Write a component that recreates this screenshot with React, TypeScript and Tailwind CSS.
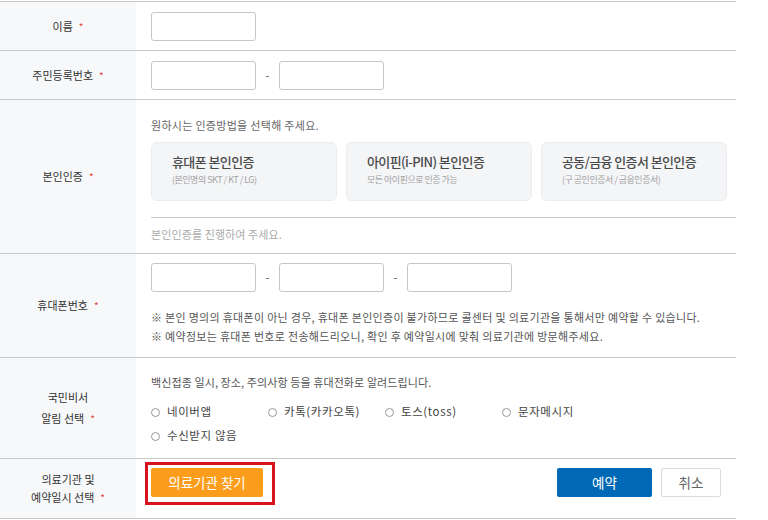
import React from "react"

const FONT = { fontFamily: '"Malgun Gothic", "Noto Sans CJK KR", "Noto Sans", sans-serif' }

function Label({ lines, leading = "leading-[21px]" }: { lines: string[]; leading?: string }) {
  return (
    <div className={`w-[136px] shrink-0 bg-[#f7f8fa] flex flex-col items-center justify-center text-[11px] text-[#333] text-center ${leading}`}>
      {lines.map((l, i) => (
        <div key={i}>
          {l}
          {i === lines.length - 1 && <span className="text-[#e2443b] ml-[6px] text-[10px]">*</span>}
        </div>
      ))}
    </div>
  )
}

function Input() {
  return <div className="w-[105px] h-[29px] rounded-[3px] border border-[#c6c6c6] bg-white" />
}

function Dash() {
  return <span className="w-[23px] text-center text-[11px] text-[#555]">-</span>
}

const CARDS = [
  { title: "휴대폰 본인인증", sub: "(본인명의 SKT / KT / LG)" },
  { title: "아이핀(i-PIN) 본인인증", sub: "모든 아이핀으로 인증 가능" },
  { title: "공동/금융 인증서 본인인증", sub: "(구 공인인증서 / 금융인증서)" },
]

const RADIOS = ["네이버앱", "카톡(카카오톡)", "토스(toss)", "문자메시지", "수신받지 않음"]

export default function App() {
  return (
    <div className="w-[768px] h-[520px] bg-white overflow-hidden" style={FONT}>
      <div className="w-[736px] mt-px border-t border-[#c9c9c9]">
        {/* 이름 */}
        <div className="flex h-[49px] border-b border-[#c9c9c9]">
          <Label lines={["이름"]} />
          <div className="flex-1 flex items-center pl-[15px]">
            <Input />
          </div>
        </div>

        {/* 주민등록번호 */}
        <div className="flex h-[49px] border-b border-[#c9c9c9]">
          <Label lines={["주민등록번호"]} />
          <div className="flex-1 flex items-center pl-[15px]">
            <Input />
            <Dash />
            <Input />
          </div>
        </div>

        {/* 본인인증 */}
        <div className="flex h-[154px] border-b border-[#c9c9c9]">
          <Label lines={["본인인증"]} />
          <div className="flex-1 pl-[15px] pt-[18px]">
            <p className="text-[11px] leading-[14px] tracking-[0.3px] text-[#666]">원하시는 인증방법을 선택해 주세요.</p>
            <div className="flex gap-[9px] mt-[10px]">
              {CARDS.map((c) => (
                <div
                  key={c.title}
                  className="w-[186px] h-[59px] rounded-[6px] bg-[#f4f5f7] border border-[#ececee] pl-[20px] pt-[10px]"
                >
                  <div className="text-[13px] leading-[18px] tracking-[-0.6px] font-medium text-[#4a4a4a]">{c.title}</div>
                  <div className="text-[9px] leading-[14px] tracking-[-0.5px] text-[#a3a3a3] mt-[2px]">{c.sub}</div>
                </div>
              ))}
            </div>
            <div className="border-t border-[#c9c9c9] mt-[16px] pt-[9px]">
              <p className="text-[11px] leading-[14px] tracking-[0.1px] text-[#aaa]">본인인증를 진행하여 주세요.</p>
            </div>
          </div>
        </div>

        {/* 휴대폰번호 */}
        <div className="flex h-[104px] border-b border-[#c9c9c9]">
          <Label lines={["휴대폰번호"]} />
          <div className="flex-1 pl-[15px] pt-[9px]">
            <div className="flex items-center">
              <Input />
              <Dash />
              <Input />
              <Dash />
              <Input />
            </div>
            <div className="mt-[16px] text-[11px] leading-[19px] tracking-[0.3px] text-[#555]">
              <p>※ 본인 명의의 휴대폰이 아닌 경우, 휴대폰 본인인증이 불가하므로 콜센터 및 의료기관을 통해서만 예약할 수 있습니다.</p>
              <p>※ 예약정보는 휴대폰 번호로 전송해드리오니, 확인 후 예약일시에 맞춰 의료기관에 방문해주세요.</p>
            </div>
          </div>
        </div>

        {/* 국민비서 */}
        <div className="flex h-[101px] border-b border-[#c9c9c9]">
          <Label lines={["국민비서", "알림 선택"]} />
          <div className="flex-1 pl-[15px] pt-[17px]">
            <p className="text-[11px] leading-[14px] tracking-[0.1px] text-[#555]">백신접종 일시, 장소, 주의사항 등을 휴대전화로 알려드립니다.</p>
            <div className="grid grid-cols-[117px_117px_117px_117px] mt-[11px]">
              {RADIOS.map((r) => (
                <label key={r} className="flex items-center h-[24px] text-[11.5px] tracking-[0.6px] text-[#444]">
                  <span className="w-[9px] h-[9px] rounded-full border border-[#999] bg-white mr-[7px] shrink-0" />
                  {r}
                </label>
              ))}
            </div>
          </div>
        </div>

        {/* 의료기관 */}
        <div className="flex h-[60px] border-b border-[#c9c9c9]">
          <Label lines={["의료기관 및", "예약일시 선택"]} leading="leading-[18px]" />
          <div className="flex-1 flex items-start pl-[15px] pr-[15px] pt-[9px]">
            <div className="relative">
              <button className="w-[112px] h-[29px] rounded-[2px] bg-[#fb9d1b] text-white text-[13.5px]">의료기관 찾기</button>
              <div className="absolute -left-[6px] -top-[6px] w-[130px] h-[43px] border-[3px] border-[#d7141e]" />
            </div>
            <div className="ml-auto flex gap-[9px]">
              <button className="w-[95px] h-[29px] rounded-[2px] bg-[#0068b4] text-white text-[13.5px]">예약</button>
              <button className="w-[60px] h-[29px] rounded-[2px] bg-white border border-[#dcdcdc] text-[#666] text-[13.5px]">취소</button>
            </div>
          </div>
        </div>
      </div>
    </div>
  )
}
